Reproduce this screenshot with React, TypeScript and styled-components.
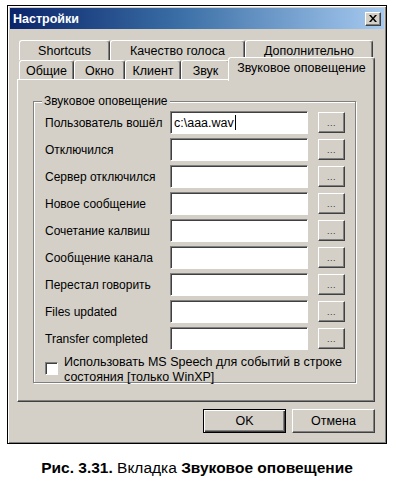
import styled, { createGlobalStyle } from 'styled-components';

const Global = createGlobalStyle`
  html, body {
    margin: 0;
    padding: 0;
    background: #fff;
  }
  body {
    font-family: 'Liberation Sans', Arial, sans-serif;
    font-size: 12px;
    color: #000;
  }
`;

const Page = styled.div`
  width: 394px;
  padding: 5px 0 0 7px;
  box-sizing: border-box;
`;

const Window = styled.div`
  width: 380px;
  box-sizing: border-box;
  background: #d4d0c8;
  border: 1px solid #000;
  box-shadow: inset 1px 1px #fff, inset -1px -1px #808080;
  padding: 2px 2px 10px;
`;

const TitleBar = styled.div`
  height: 21px;
  display: flex;
  align-items: center;
  justify-content: space-between;
  padding: 0 3px 0 3px;
  background: linear-gradient(to right, #0a246a 0%, #3a6ea5 45%, #a6caf0 100%);
  color: #fff;
  font-weight: 700;
  font-size: 12.5px;
`;

const CloseButton = styled.div`
  width: 16px;
  height: 14px;
  box-sizing: border-box;
  background: #d4d0c8;
  border: 1px solid;
  border-color: #fff #404040 #404040 #fff;
  box-shadow: inset -1px -1px #808080;
  display: flex;
  align-items: center;
  justify-content: center;
`;

const Content = styled.div`
  padding: 11px 9px 0 7px;
`;

const TabStrip = styled.div`
  display: flex;
  flex-direction: column;
  padding: 0 2px;
`;

const TabRow = styled.div<{ $h: number }>`
  display: flex;
  height: ${({ $h }) => $h}px;
`;

const Tab = styled.div<{ $w: number; $active?: boolean }>`
  width: ${({ $w }) => $w}px;
  box-sizing: border-box;
  flex: none;
  display: flex;
  align-items: center;
  justify-content: center;
  font-size: 12.5px;
  white-space: nowrap;
  background: #d4d0c8;
  border-top: 1px solid #fff;
  border-left: 1px solid #fff;
  border-right: 1px solid #404040;
  border-radius: 3px 3px 0 0;
  box-shadow: inset -1px 0 #808080;
  position: relative;
  ${({ $active }) =>
    $active
      ? `
    margin: -3px -2px 0 -2px;
    width: auto;
    flex: 1;
    height: 24px;
    z-index: 1;
    padding-bottom: 3px;
  `
      : `
    height: 100%;
    padding-top: 1px;
  `}
`;

const Panel = styled.div`
  height: 323px;
  box-sizing: border-box;
  border: 1px solid;
  border-color: #fff #404040 #404040 #fff;
  box-shadow: inset -1px -1px #808080;
  padding: 21px 18px 0 15px;
`;

const Group = styled.div`
  position: relative;
  height: 282px;
  box-sizing: border-box;
  border: 1px solid #808080;
  box-shadow: inset 1px 1px #fff, 1px 1px #fff;
  padding: 7px 10px 0 11px;
`;

const Legend = styled.div`
  position: absolute;
  top: -8px;
  left: 8px;
  padding: 0 2px;
  background: #d4d0c8;
  line-height: 15px;
`;

const Row = styled.div`
  display: grid;
  grid-template-columns: 125px 138px 27px;
  align-items: center;
  height: 27px;
`;

const Label = styled.div`
  white-space: nowrap;
`;

const Field = styled.div`
  height: 23px;
  box-sizing: border-box;
  background: #fff;
  border: 1px solid;
  border-color: #808080 #fff #fff #808080;
  box-shadow: inset 1px 1px #404040;
  padding: 0 3px;
  display: flex;
  align-items: center;
  font-size: 12.5px;
  white-space: nowrap;
`;

const Caret = styled.span`
  display: inline-block;
  width: 1px;
  height: 15px;
  background: #000;
  margin-left: 1px;
`;

const BrowseButton = styled.div`
  margin-left: 10px;
  width: 27px;
  height: 21px;
  box-sizing: border-box;
  border: 1px solid;
  border-color: #fff #404040 #404040 #fff;
  box-shadow: inset -1px -1px #808080;
  display: flex;
  align-items: flex-end;
  justify-content: center;
  padding-bottom: 4px;
  font-size: 9px;
  line-height: 9px;
  color: #333;
  letter-spacing: 0.5px;
`;

const CheckRow = styled.div`
  display: flex;
  align-items: flex-start;
  gap: 6px;
  margin-top: 3px;
  line-height: 15px;
  font-size: 12.5px;
`;

const CheckBox = styled.div`
  width: 13px;
  height: 13px;
  flex: none;
  box-sizing: border-box;
  margin-top: 7px;
  background: #fff;
  border: 1px solid;
  border-color: #808080 #fff #fff #808080;
  box-shadow: inset 1px 1px #404040;
`;

const ButtonBar = styled.div`
  display: flex;
  justify-content: flex-end;
  gap: 6px;
  margin-top: 7px;
`;

const DialogButton = styled.div<{ $default?: boolean }>`
  width: 83px;
  height: 24px;
  box-sizing: border-box;
  display: flex;
  align-items: center;
  justify-content: center;
  font-size: 12.5px;
  border: 1px solid;
  border-color: ${({ $default }) =>
    $default ? '#000' : '#fff #404040 #404040 #fff'};
  box-shadow: ${({ $default }) =>
    $default
      ? 'inset 1px 1px #fff, inset -1px -1px #404040, inset -2px -2px #808080'
      : 'inset -1px -1px #808080'};
`;

const Caption = styled.div`
  margin-top: 15px;
  width: 380px;
  text-align: center;
  font-family: 'Liberation Sans', Arial, sans-serif;
  font-size: 15.5px;
  line-height: 18px;
  color: #000;
`;

const backTabs = [
  { name: 'Shortcuts', w: 91 },
  { name: 'Качество голоса', w: 135 },
  { name: 'Дополнительно', w: 128 },
];

const frontTabs = [
  { name: 'Общие', w: 55 },
  { name: 'Окно', w: 51 },
  { name: 'Клиент', w: 56 },
  { name: 'Звук', w: 49 },
  { name: 'Звуковое оповещение', w: 143, active: true },
];

const events = [
  'Пользователь вошёл',
  'Отключился',
  'Сервер отключился',
  'Новое сообщение',
  'Сочетание калвиш',
  'Сообщение канала',
  'Перестал говорить',
  'Files updated',
  'Transfer completed',
];

export default function App() {
  return (
    <Page>
      <Global />
      <Window>
        <TitleBar>
          <span>Настройки</span>
          <CloseButton>
            <svg width="8" height="7" viewBox="0 0 8 7">
              <path d="M0 0h2l2 2.5L6 0h2L5 3.5 8 7H6L4 4.5 2 7H0l3-3.5z" fill="#000" />
            </svg>
          </CloseButton>
        </TitleBar>
        <Content>
          <TabStrip>
            <TabRow $h={20}>
              {backTabs.map((t) => (
                <Tab key={t.name} $w={t.w}>
                  {t.name}
                </Tab>
              ))}
            </TabRow>
            <TabRow $h={19}>
              {frontTabs.map((t) => (
                <Tab key={t.name} $w={t.w} $active={t.active}>
                  {t.name}
                </Tab>
              ))}
            </TabRow>
          </TabStrip>
          <Panel>
            <Group>
              <Legend>Звуковое оповещение</Legend>
              {events.map((name, i) => (
                <Row key={name}>
                  <Label>{name}</Label>
                  <Field>
                    {i == 0 ? (
                      <>
                        c:\aaa.wav
                        <Caret />
                      </>
                    ) : null}
                  </Field>
                  <BrowseButton>...</BrowseButton>
                </Row>
              ))}
              <CheckRow>
                <CheckBox />
                <span>
                  Использовать MS Speech для событий в строке
                  <br />
                  состояния [только WinXP]
                </span>
              </CheckRow>
            </Group>
          </Panel>
          <ButtonBar>
            <DialogButton $default>OK</DialogButton>
            <DialogButton>Отмена</DialogButton>
          </ButtonBar>
        </Content>
      </Window>
      <Caption>
        <b>Рис. 3.31.</b> Вкладка <b>Звуковое оповещение</b>
      </Caption>
    </Page>
  );
}
